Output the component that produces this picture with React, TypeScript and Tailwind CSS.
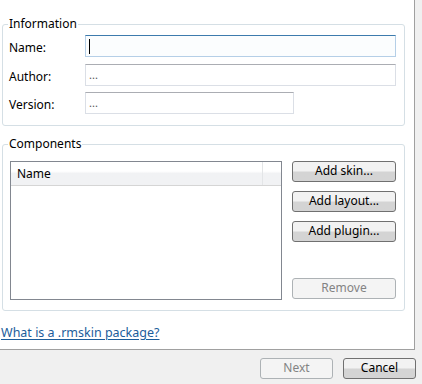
import React from "react";

const font = { fontFamily: '"Noto Sans", "Liberation Sans", sans-serif' };

function TextBox({ width, value, focused }: { width: string; value?: string; focused?: boolean }) {
  return (
    <div
      className={`h-[22px] ${width} flex items-center pl-[3px] border ${
        focused
          ? "border-[#b5cfe7] border-t-[#3d7bad] bg-[#fbfdfe]"
          : "border-[#dbdfe6] border-t-[#abadb3] bg-white"
      }`}
    >
      {focused ? (
        <div className="w-px h-[15px] bg-black" />
      ) : (
        <span className="text-[11px] leading-none text-[#555] -mt-[2px]">{value}</span>
      )}
    </div>
  );
}

function Button({ label, disabled, className }: { label: string; disabled?: boolean; className?: string }) {
  return (
    <div
      className={`h-[21px] flex items-center justify-center rounded-[3px] border text-[12px] leading-none ${
        disabled
          ? "border-[#adb2b5] bg-[#f4f4f4] text-[#838383]"
          : "border-[#707070] bg-gradient-to-b from-[#f2f2f2] from-45% to-[#d4d4d4] to-55% text-black"
      } ${className ?? ""}`}
    >
      <span className="-mt-px">{label}</span>
    </div>
  );
}

export default function App() {
  return (
    <div className="w-[422px] h-[384px] bg-[#f0f0f0] text-[12px] text-black overflow-hidden" style={font}>
      <div className="w-[415px] h-[350px] bg-white border-r border-b border-[#a0a0a0] flex flex-col">
        <fieldset className="ml-[2px] mt-[16px] w-[403px] border border-[#d5dfe5] rounded-[3px] pl-[6px] pb-[11px] pt-[3px]">
          <legend className="px-px -ml-px leading-[16px]">Information</legend>
          <div className="flex flex-col">
            <div className="flex items-center">
              <span className="w-[76px] pt-[3px]">Name:</span>
              <TextBox width="w-[311px]" focused />
            </div>
            <div className="flex items-center mt-[7px]">
              <span className="w-[76px] pt-[3px]">Author:</span>
              <TextBox width="w-[311px]" value="..." />
            </div>
            <div className="flex items-center mt-[6px]">
              <span className="w-[76px] pt-[3px]">Version:</span>
              <TextBox width="w-[209px]" value="..." />
            </div>
          </div>
        </fieldset>

        <fieldset className="ml-[2px] mt-[10px] w-[403px] border border-[#d5dfe5] rounded-[3px] pl-[7px] pb-[10px] pt-[9px]">
          <legend className="px-px -ml-[2px] leading-[16px]">Components</legend>
          <div className="flex gap-[10px]">
            <div className="w-[272px] h-[139px] border border-[#828790] bg-white">
              <div className="h-[24px] flex border-b border-[#d5d5d5] bg-gradient-to-b from-white from-40% to-[#f1f2f4] to-50%">
                <div className="w-[252px] border-r border-[#e3e5e7] pl-[6px] flex items-center">Name</div>
              </div>
            </div>
            <div className="w-[104px] flex flex-col gap-[9px]">
              <Button label="Add skin..." />
              <Button label="Add layout..." />
              <Button label="Add plugin..." />
              <Button label="Remove" disabled className="mt-auto mb-px" />
            </div>
          </div>
        </fieldset>

        <div className="mt-[13px] pl-px">
          <span className="text-[#1c5d9b] underline underline-offset-2 leading-[16px] text-[12.5px]">What is a .rmskin package?</span>
        </div>
      </div>
      <div className="flex justify-end gap-[10px] pr-[6px] mt-[8px]">
        <Button label="Next" disabled className="w-[73px]" />
        <Button label="Cancel" className="w-[73px]" />
      </div>
    </div>
  );
}
